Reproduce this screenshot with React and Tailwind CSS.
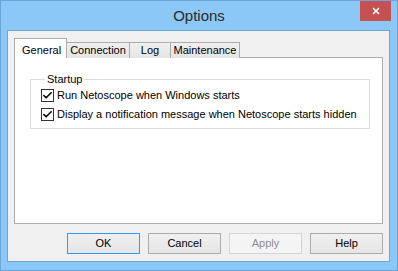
import { Check, X } from 'lucide-react'

const tabs = [
  { label: 'General', w: 'w-[53px]', active: true },
  { label: 'Connection', w: 'w-[64px]' },
  { label: 'Log', w: 'w-[42px]' },
  { label: 'Maintenance', w: 'w-[70px]' },
]

const options = [
  'Run Netoscope when Windows starts',
  'Display a notification message when Netoscope starts hidden',
]

function Checkbox({ label }) {
  return (
    <label className="flex items-center h-[19px] whitespace-nowrap">
      <span className="w-[13px] h-[13px] border border-[#333] bg-white flex items-center justify-center shrink-0">
        <Check className="w-[11px] h-[11px] text-black" strokeWidth={3.5} />
      </span>
      <span className="ml-[3px] text-[11px] text-black leading-none">{label}</span>
    </label>
  )
}

function Button({ children, primary, disabled }) {
  return (
    <button
      className={
        'w-[73px] h-[21px] text-[11px] leading-none border bg-gradient-to-b ' +
        (primary
          ? 'from-[#f0f0f0] to-[#e5e5e5] border-[#3399ff] text-black'
          : disabled
          ? 'from-[#f4f4f4] to-[#f4f4f4] border-[#d5d5d5] text-[#8d8d8d]'
          : 'from-[#f0f0f0] to-[#e5e5e5] border-[#acacac] text-black')
      }
    >
      {children}
    </button>
  )
}

export default function App() {
  return (
    <div
      className="w-[398px] h-[271px] bg-[#8bc7f7] border border-[#6aa6dc] flex flex-col"
      style={{ fontFamily: '"Liberation Sans", Arial, sans-serif' }}
    >
      {/* title bar */}
      <div className="h-[29px] relative flex items-center justify-center shrink-0">
        <span className="text-[15px] text-[#2b2b2b] mt-[1px]">Options</span>
        <div className="absolute right-[6px] top-0 w-[31px] h-[20px] bg-[#c75050] flex items-center justify-center">
          <X className="w-[10px] h-[10px] text-white" strokeWidth={4} />
        </div>
      </div>

      {/* client */}
      <div className="flex-1 ml-[6px] mr-[7px] mb-[8px] border border-[#6aa6dc] bg-[#f0f0f0] flex flex-col px-[6px] pt-[7px]">
        <div className="flex items-end h-[20px] relative z-10 whitespace-nowrap">
          {tabs.map((t) =>
            t.active ? (
              <div
                key={t.label}
                className={`${t.w} h-[20px] bg-white border border-b-0 border-[#adadad] text-[11px] text-black flex items-start pl-[7px] pt-[3px]`}
              >
                {t.label}
              </div>
            ) : (
              <div
                key={t.label}
                className={`${t.w} h-[16px] -ml-px bg-gradient-to-b from-[#f0f0f0] to-[#e5e5e5] border border-b-0 border-[#acacac] text-[11px] text-black flex items-center justify-center leading-none`}
              >
                {t.label}
              </div>
            )
          )}
        </div>
        <div className="h-[167px] bg-white border border-[#adadad] -mt-px px-[15px] pt-[16px]">
          <fieldset className="border border-[#dcdcdc] w-[340px] h-[55px] pl-[10px]">
            <legend className="text-[11px] text-black px-[2px] ml-[4px] leading-none">Startup</legend>
            <div className="flex flex-col mt-[1px]">
              {options.map((o) => (
                <Checkbox key={o} label={o} />
              ))}
            </div>
          </fieldset>
        </div>
        <div className="flex justify-end gap-[8px] mt-[9px]">
          <Button primary>OK</Button>
          <Button>Cancel</Button>
          <Button disabled>Apply</Button>
          <Button>Help</Button>
        </div>
      </div>
    </div>
  )
}
